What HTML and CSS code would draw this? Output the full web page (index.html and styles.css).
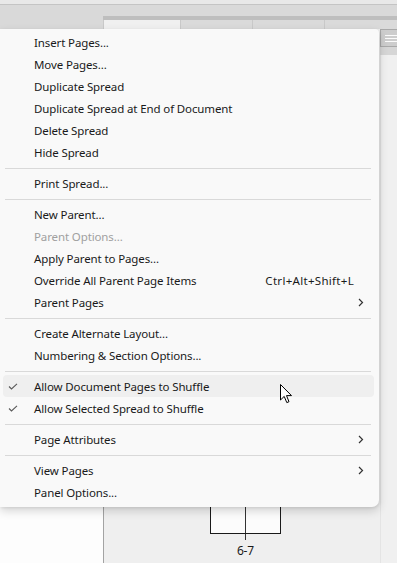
FILE: index.html
```html
<!DOCTYPE html>
<html lang="en">
<head>
  <meta charset="UTF-8" />
  <meta name="viewport" content="width=device-width, initial-scale=1.0" />
  <title>Pages panel menu</title>
  <link rel="stylesheet" href="styles.css">
</head>
<body>
  <div class="screen">
    <div class="titlebar"></div>
    <div class="toolbar">
      <div class="toolbar-gap"></div>
      <div class="panel-head">
        <div class="panel-edge"></div>
        <div class="tabs">
          <div class="tab active"></div>
          <div class="tab"></div>
          <div class="tab"></div>
          <div class="tab last"></div>
        </div>
      </div>
    </div>
    <div class="workspace">
      <div class="pasteboard"></div>
      <div class="panel">
        <div class="spread">
          <div class="spread-box"><span class="fold"></span></div>
          <div class="spread-stem"></div>
          <div class="spread-label">6-7</div>
        </div>
      </div>
      <div class="side">
        <div class="menu-btn">
          <span></span><span></span><span></span>
        </div>
        <div class="side-strip"></div>
        <div class="side-body"></div>
      </div>
    </div>

    <!-- flyout menu -->
    <div class="menu">
      <div class="item"><span class="check"></span><span class="label">Insert Pages...</span></div>
      <div class="item"><span class="check"></span><span class="label">Move Pages...</span></div>
      <div class="item"><span class="check"></span><span class="label">Duplicate Spread</span></div>
      <div class="item"><span class="check"></span><span class="label">Duplicate Spread at End of Document</span></div>
      <div class="item"><span class="check"></span><span class="label">Delete Spread</span></div>
      <div class="item"><span class="check"></span><span class="label">Hide Spread</span></div>
      <div class="sep"></div>
      <div class="item"><span class="check"></span><span class="label">Print Spread...</span></div>
      <div class="sep"></div>
      <div class="item"><span class="check"></span><span class="label">New Parent...</span></div>
      <div class="item disabled"><span class="check"></span><span class="label">Parent Options...</span></div>
      <div class="item"><span class="check"></span><span class="label">Apply Parent to Pages...</span></div>
      <div class="item"><span class="check"></span><span class="label">Override All Parent Page Items</span><span class="shortcut">Ctrl+Alt+Shift+L</span><span class="arrow"></span></div>
      <div class="item"><span class="check"></span><span class="label">Parent Pages</span><span class="arrow"><svg width="6" height="9" viewBox="0 0 6 9"><polyline points="1,1 4.5,4.5 1,8" /></svg></span></div>
      <div class="sep"></div>
      <div class="item"><span class="check"></span><span class="label">Create Alternate Layout...</span></div>
      <div class="item"><span class="check"></span><span class="label">Numbering &amp; Section Options...</span></div>
      <div class="sep"></div>
      <div class="item hover"><span class="check"><svg width="10" height="7" viewBox="0 0 10 7"><polyline points="1,3.5 3.5,6 9,0.8" /></svg></span><span class="label">Allow Document Pages to Shuffle</span></div>
      <div class="item"><span class="check"><svg width="10" height="7" viewBox="0 0 10 7"><polyline points="1,3.5 3.5,6 9,0.8" /></svg></span><span class="label">Allow Selected Spread to Shuffle</span></div>
      <div class="sep"></div>
      <div class="item"><span class="check"></span><span class="label">Page Attributes</span><span class="arrow"><svg width="6" height="9" viewBox="0 0 6 9"><polyline points="1,1 4.5,4.5 1,8" /></svg></span></div>
      <div class="sep"></div>
      <div class="item"><span class="check"></span><span class="label">View Pages</span><span class="arrow"><svg width="6" height="9" viewBox="0 0 6 9"><polyline points="1,1 4.5,4.5 1,8" /></svg></span></div>
      <div class="item"><span class="check"></span><span class="label">Panel Options...</span></div>
    </div>

    <svg class="cursor" width="13" height="20" viewBox="0 0 13 20">
      <path d="M0.5,0.5 L0.5,16 L4.2,12.4 L6.8,18.6 L9,17.7 L6.5,11.6 L11.5,11.6 Z" />
    </svg>
  </div>
</body>
</html>
```

FILE: styles.css
```css
body {
  margin: 0;
  font-family: "Noto Sans", "Open Sans", Arial, sans-serif;
  font-size: 11.5px;
  letter-spacing: -0.12px;
  color: #1a1a1a;
  background-color: #efefef;
}
.screen {
  position: relative;
  width: 397px;
  height: 563px;
  overflow: hidden;
  display: flex;
  flex-direction: column;
}

/* window chrome behind the menu */
.titlebar {
  height: 4px;
  background-color: #e8e8e8;
  border-bottom: 1px solid #c4c4c4;
}
.toolbar {
  display: flex;
  height: 24px;
  background-color: #d9d9d9;
}
.toolbar-gap {
  width: 103px;
}
.panel-head {
  flex: 1;
  display: flex;
  flex-direction: column;
  padding-top: 11px;
}
.panel-edge {
  height: 4px;
  background-color: #bebebe;
}
.tabs {
  display: flex;
  height: 9px;
  background-color: #dadada;
}
.tab {
  width: 71px;
  border-right: 1px solid #c9c9c9;
}
.tab.active {
  width: 76px;
  background-color: #f0f0f0;
  border-left: 1px solid #c9c9c9;
}
.tab.last {
  flex: 1;
  border-right: none;
}
.workspace {
  flex: 1;
  display: flex;
}
.pasteboard {
  width: 103px;
  background-color: #fdfdfd;
  border-right: 1px solid #a3a3a3;
}
.panel {
  flex: 1;
  display: flex;
  flex-direction: column;
  justify-content: flex-end;
  align-items: flex-start;
  padding-left: 106px;
  padding-bottom: 4px;
  background-color: #efefef;
}
.spread {
  display: flex;
  flex-direction: column;
  align-items: center;
}
.spread-box {
  width: 69px;
  height: 60px;
  border: 1px solid #1a1a1a;
  background-color: #fcfcfc;
  display: flex;
  justify-content: center;
}
.fold {
  width: 1px;
  background-color: #333;
}
.spread-stem {
  width: 1px;
  height: 6px;
  background-color: #333;
}
.spread-label {
  margin-top: 3px;
  font-size: 12px;
  line-height: 16px;
  color: #1a1a1a;
}
.side {
  width: 17px;
  display: flex;
  flex-direction: column;
}
.menu-btn {
  height: 16px;
  background-color: #cdcdcd;
  border: 1px solid #a9a9a9;
  border-right: none;
  display: flex;
  flex-direction: column;
  justify-content: center;
  gap: 2px;
  padding-left: 4px;
}
.menu-btn span {
  height: 1px;
  background-color: #fbfbfb;
}
.side-strip {
  height: 8px;
  background-color: #d6d6d6;
}
.side-body {
  flex: 1;
  background-color: #f0f0f0;
  border-left: 1px solid #e4e4e4;
}

/* flyout menu */
.menu {
  position: absolute;
  left: 0;
  top: 29px;
  width: 379px;
  padding: 2px 0 4px;
  background-color: #f9f9f9;
  border-radius: 0 4px 7px 0;
  box-shadow: 0 4px 10px rgba(0, 0, 0, 0.16), 1px 1px 3px rgba(0, 0, 0, 0.08);
}
.item {
  display: flex;
  align-items: center;
  height: 22px;
  margin: 0 5px 0 3px;
  padding: 0 10px 0 5px;
  border-radius: 4px;
  white-space: nowrap;
}
.item.hover {
  background-color: #efefef;
}
.item.disabled {
  color: #a0a0a0;
}
.check {
  width: 26px;
  display: flex;
  align-items: center;
}
.check svg polyline {
  fill: none;
  stroke: #5a5a5a;
  stroke-width: 1.1;
}
.label {
  flex: 1;
}
.shortcut {
  margin-right: 4px;
  letter-spacing: 0.3px;
}
.arrow {
  width: 6px;
  display: flex;
  align-items: center;
}
.arrow svg polyline {
  fill: none;
  stroke: #333;
  stroke-width: 1.2;
}
.sep {
  height: 1px;
  margin: 5px 8px 3px 5px;
  background-color: #d9d9d9;
}
.cursor {
  position: absolute;
  left: 280px;
  top: 384px;
}
.cursor path {
  fill: #fff;
  stroke: #000;
  stroke-width: 1;
}
```
